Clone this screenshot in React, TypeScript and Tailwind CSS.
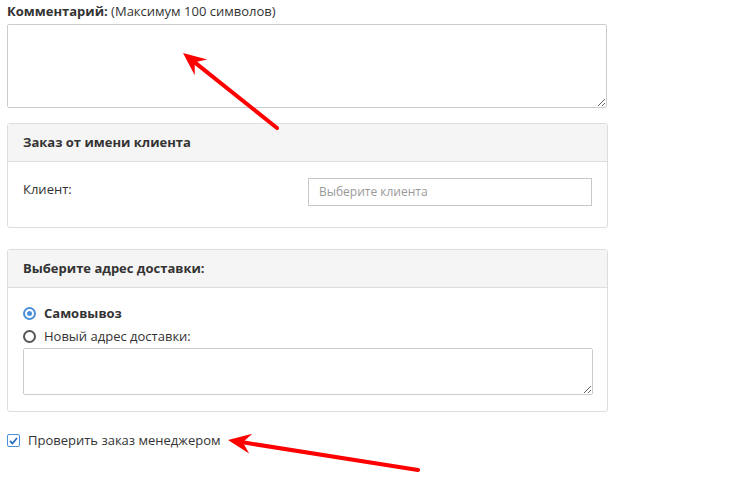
import React from 'react';

function Radio({ checked }: { checked: boolean }) {
  return (
    <span
      className={
        'inline-flex h-[13px] w-[13px] items-center justify-center rounded-full border-2 ' +
        (checked ? 'border-[#4a90d9]' : 'border-[#555]')
      }
    >
      {checked && <span className="h-[5px] w-[5px] rounded-full bg-[#4a90d9]" />}
    </span>
  );
}

function Arrow({ x1, y1, x2, y2 }: { x1: number; y1: number; x2: number; y2: number }) {
  const ang = Math.atan2(y2 - y1, x2 - x1);
  const len = 23;
  const wid = 10;
  const bx = x2 - Math.cos(ang) * len;
  const by = y2 - Math.sin(ang) * len;
  const px = -Math.sin(ang) * wid;
  const py = Math.cos(ang) * wid;
  const lx = x2 - Math.cos(ang) * 15;
  const ly = y2 - Math.sin(ang) * 15;
  return (
    <g>
      <line x1={x1} y1={y1} x2={lx} y2={ly} stroke="#ff0000" strokeWidth={4} strokeLinecap="round" />
      <polygon
        points={`${x2},${y2} ${bx + px},${by + py} ${lx},${ly} ${bx - px},${by - py}`}
        fill="#ff0000"
      />
    </g>
  );
}

export default function App() {
  return (
    <div
      className="relative h-[480px] w-[756px] overflow-hidden bg-white text-[13px] text-[#333]"
      style={{ fontFamily: '"Open Sans", "Noto Sans", sans-serif' }}
    >
      <div className="w-[608px] pl-[7px] pt-[1px]">
        <div className="leading-[20px]">
          <span className="font-bold">Комментарий:</span> (Максимум 100 символов)
        </div>
        <textarea
          readOnly
          className="mt-[3px] block h-[84px] w-[600px] resize-y rounded-[2px] border border-[#ccc] bg-white outline-none"
        />

        <div className="mt-[15px] rounded-[3px] border border-[#ddd] bg-white">
          <div className="flex h-[38px] items-center border-b border-[#ddd] bg-[#f5f5f5] px-[15px] font-bold">
            Заказ от имени клиента
          </div>
          <div className="flex h-[65px] items-start px-[15px] pt-[16px]">
            <div className="w-[286px] pt-[1px] leading-[20px]">Клиент:</div>
            <div className="flex h-[28px] w-[285px] items-center border border-[#c8c8c8] px-[10px] text-[12px] text-[#999]">
              Выберите клиента
            </div>
          </div>
        </div>

        <div className="mt-[21px] rounded-[3px] border border-[#ddd] bg-white">
          <div className="flex h-[38px] items-center border-b border-[#ddd] bg-[#f5f5f5] px-[15px] font-bold">
            Выберите адрес доставки:
          </div>
          <div className="px-[15px] pb-[16px] pt-[14px]">
            <div className="flex h-[23px] items-center gap-[8px]">
              <Radio checked />
              <span className="font-bold">Самовывоз</span>
            </div>
            <div className="flex h-[23px] items-center gap-[8px]">
              <Radio checked={false} />
              <span>Новый адрес доставки:</span>
            </div>
            <textarea
              readOnly
              className="block h-[47px] w-[570px] resize-y rounded-[2px] border border-[#ccc] outline-none"
            />
          </div>
        </div>

        <div className="mt-[19px] flex items-center gap-[8px]">
          <span className="flex h-[13px] w-[13px] items-center justify-center rounded-[2px] border border-[#4a90d9] bg-white">
            <svg width="9" height="8" viewBox="0 0 9 8">
              <path d="M1 4 L3.5 6.5 L8 1" fill="none" stroke="#2a6fc4" strokeWidth="1.8" />
            </svg>
          </span>
          <span>Проверить заказ менеджером</span>
        </div>
      </div>

      <svg className="pointer-events-none absolute left-0 top-0" width="756" height="480">
        <Arrow x1={277} y1={128} x2={183} y2={53} />
        <Arrow x1={418} y1={470} x2={228} y2={440} />
      </svg>
    </div>
  );
}
